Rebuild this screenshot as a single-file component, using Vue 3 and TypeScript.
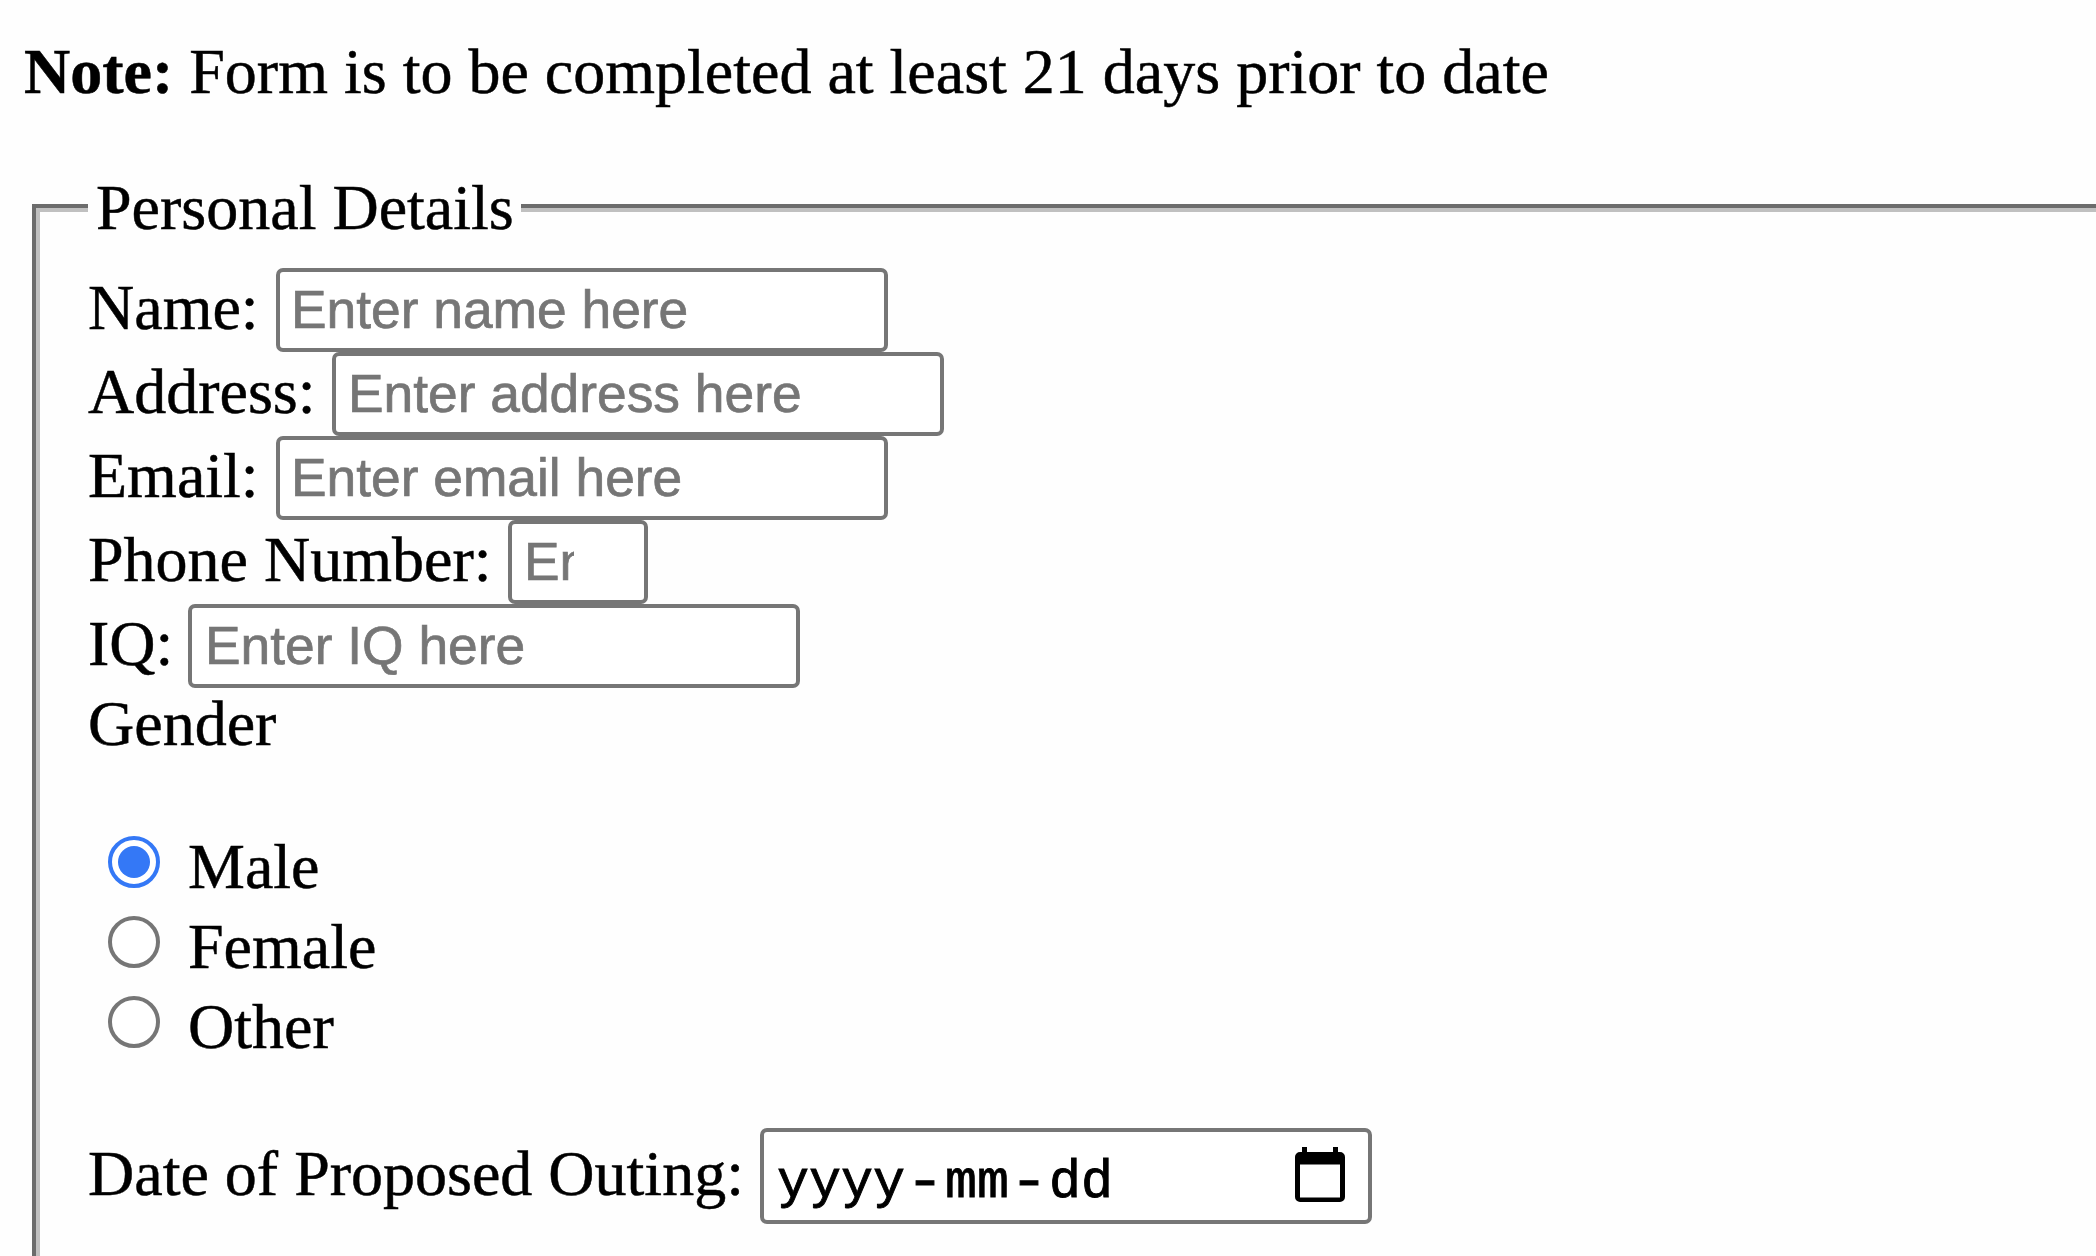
<script setup lang="ts">
import { ref } from 'vue'

interface Field {
  id: string
  label: string
  type: string
  placeholder: string
}

const fields: Field[] = [
  { id: 'name', label: 'Name:', type: 'text', placeholder: 'Enter name here' },
  { id: 'address', label: 'Address:', type: 'text', placeholder: 'Enter address here' },
  { id: 'email', label: 'Email:', type: 'email', placeholder: 'Enter email here' },
  { id: 'phone', label: 'Phone Number:', type: 'tel', placeholder: 'Enter phone number here' },
  { id: 'iq', label: 'IQ:', type: 'text', placeholder: 'Enter IQ here' },
]

const genders: string[] = ['Male', 'Female', 'Other']
const gender = ref<string>('Male')
</script>

<template>
  <main class="page">
    <p class="note"><b>Note:</b> Form is to be completed at least 21 days prior to date</p>
    <fieldset class="details">
      <legend>Personal Details</legend>
      <div v-for="f in fields" :key="f.id" class="row" :class="f.id">
        <label :for="f.id">{{ f.label }}</label>
        <input :id="f.id" class="box" :type="f.type" :placeholder="f.placeholder" />
      </div>
      <div class="gender-title">Gender</div>
      <div class="genders">
        <label v-for="g in genders" :key="g" class="option">
          <input v-model="gender" type="radio" name="gender" :value="g" />
          <span>{{ g }}</span>
        </label>
      </div>
      <div class="row date">
        <label>Date of Proposed Outing:</label>
        <div class="box date-box">
          <span class="date-text">yyyy<i>-</i>mm<i>-</i>dd</span>
          <svg class="calendar" width="52" height="58" viewBox="0 0 52 58">
            <path
              fill="#000"
              fill-rule="evenodd"
              d="M8 1h5v5h26V1h5v5h2a5 5 0 0 1 5 5v40a5 5 0 0 1-5 5H6a5 5 0 0 1-5-5V11a5 5 0 0 1 5-5h2zM6 18.500v33h40v-33z"
            />
          </svg>
        </div>
      </div>
    </fieldset>
  </main>
</template>

<style>
body {
  margin: 0;
  background: #fefefe;
  overflow: hidden;
}
</style>

<style scoped>
.page {
  box-sizing: border-box;
  width: 2096px;
  height: 1256px;
  overflow: hidden;
  padding-top: 36px;
  font-family: 'Liberation Serif', 'Times New Roman', serif;
  font-size: 64px;
  line-height: 72px;
  color: #000;
  -webkit-text-stroke: 0.5px currentColor;
}
.note {
  margin: 0 0 64px 24px;
  white-space: nowrap;
}
.details {
  box-sizing: border-box;
  width: 2160px;
  height: 1200px;
  margin: 0 0 0 32px;
  padding: 24px 48px 0;
  border: 8px groove rgb(192, 192, 192);
}
legend {
  padding: 0 7px 0 8px;
}
.row {
  display: flex;
  align-items: flex-start;
  height: 84px;
  white-space: nowrap;
}
.row label {
  flex: none;
  width: 188px;
  padding-top: 4px;
}
.address label {
  width: 244px;
}
.phone label {
  width: 420px;
}
.iq label {
  width: 100px;
}
.date label {
  width: 672px;
  padding-top: 10px;
}
.box {
  box-sizing: border-box;
  width: 612px;
  height: 84px;
  margin: 0;
  padding: 0 12px 2px 11px;
  border: 4px solid #767676;
  border-radius: 7px;
  outline: none;
  background: #fff;
  font-family: 'Liberation Sans', Arial, sans-serif;
  font-size: 53.333px;
  line-height: 60px;
  color: #000;
}
.box::placeholder {
  color: #767676;
  opacity: 1;
  -webkit-text-stroke: 0.7px #767676;
}
.address .box {
  padding-left: 12px;
}
.iq .box {
  padding-left: 13px;
}
.phone .box {
  width: 140px;
  padding-left: 12px;
  padding-right: 70px;
}
.genders {
  display: flex;
  flex-direction: column;
  margin: 70px 0 58px 20px;
}
.option {
  display: flex;
  align-items: flex-start;
  gap: 28px;
  height: 80px;
}
.option span {
  padding-top: 1px;
}
.option input {
  appearance: none;
  box-sizing: border-box;
  display: grid;
  place-items: center;
  width: 52px;
  height: 52px;
  margin: 6px 0 0;
  border: 4px solid #767676;
  border-radius: 50%;
  background: #fff;
}
.option input:checked {
  border-color: #3478f6;
}
.option input:checked::before {
  content: '';
  width: 32px;
  height: 32px;
  border-radius: 50%;
  background: #3478f6;
}
.date-box {
  display: flex;
  justify-content: space-between;
  height: 96px;
  padding: 0 22px 0 13px;
}
.date-text {
  padding-top: 21px;
  font-family: 'Courier', 'Liberation Mono', 'Courier New', monospace;
  -webkit-text-stroke: 0.9px #000;
}
.date-text i {
  display: inline-block;
  margin: 0 4px;
  font-style: normal;
  transform: scaleX(1.22);
}
.calendar {
  margin-top: 14px;
}
</style>
